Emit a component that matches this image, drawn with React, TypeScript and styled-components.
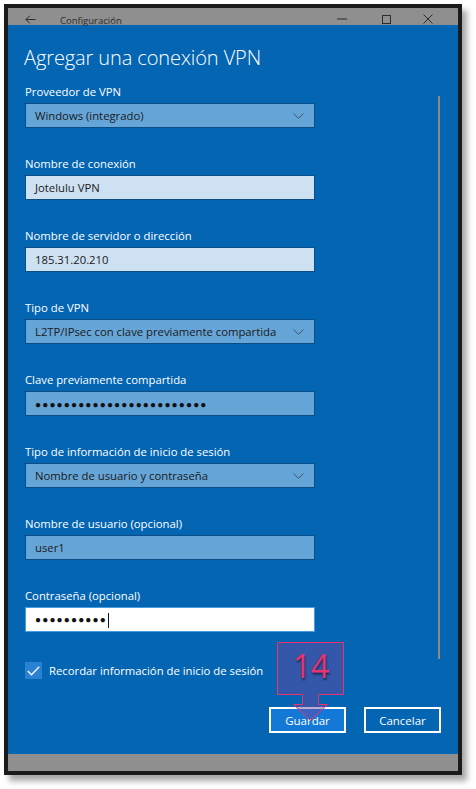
import React from 'react'
import styled, { createGlobalStyle } from 'styled-components'

const colors = {
  accent: '#0465b3',
  chrome: '#8f8f8f',
  frame: '#1b1b1b',
  fieldDark: '#66a5d7',
  fieldLight: '#cde1f2',
  fieldBorder: '#0b4d86',
  white: '#ffffff',
  ink: '#1a1a1a',
  pink: '#e8336f'
}

const GlobalStyle = createGlobalStyle`
  html, body {
    margin: 0;
    padding: 0;
    background: #ffffff;
  }
  body {
    font-family: "Open Sans", "Noto Sans", "Liberation Sans", sans-serif;
  }
`

const Page = styled.div`
  width: 476px;
  height: 789px;
  padding: 4px 0 0 4px;
  box-sizing: border-box;
`

const Window = styled.div`
  position: relative;
  width: 458px;
  height: 771px;
  box-sizing: border-box;
  border: 4px solid ${colors.frame};
  background: ${colors.accent};
  display: flex;
  flex-direction: column;
  box-shadow: 5px 6px 6px rgba(0, 0, 0, 0.35);
`

const TitleBar = styled.div`
  height: 17px;
  flex: none;
  background: ${colors.chrome};
  display: flex;
  align-items: flex-end;
  padding: 0 10px 0 16px;
  color: #2b2b2b;
`

const TitleText = styled.span`
  font-size: 9.5px;
  line-height: 12px;
  margin-left: 24px;
  flex: 1;
  transform: translateY(2px);
`

const ChromeButton = styled.span<{ w: number }>`
  width: ${(p) => p.w}px;
  height: 14px;
  display: flex;
  align-items: center;
  justify-content: center;
  transform: translateY(1px);
`

const Body = styled.div`
  flex: 1;
  display: flex;
  flex-direction: column;
`

const Scroller = styled.div`
  display: flex;
  align-items: flex-start;
`

const Form = styled.div`
  flex: 1;
  padding: 19px 0 0 16px;
`

const Heading = styled.h1`
  margin: 0 0 10px;
  font-size: 20px;
  line-height: 28px;
  font-weight: 300;
  color: ${colors.white};
  letter-spacing: -0.1px;
`

const Fields = styled.div`
  display: flex;
  flex-direction: column;
  gap: 26px;
  padding-left: 1px;
`

const Field = styled.div`
  display: flex;
  flex-direction: column;
  gap: 3px;
`

const Label = styled.div`
  font-size: 11.3px;
  line-height: 16px;
  padding-top: 2px;
  color: ${colors.white};
`

type Tone = 'dark' | 'light' | 'focus'

const fieldBg: Record<Tone, string> = {
  dark: colors.fieldDark,
  light: colors.fieldLight,
  focus: colors.white
}

const Input = styled.div<{ tone: Tone }>`
  width: 290px;
  height: 25px;
  box-sizing: border-box;
  border: 1px solid ${(p) => (p.tone === 'focus' ? '#4a9be0' : colors.fieldBorder)};
  background: ${(p) => fieldBg[p.tone]};
  display: flex;
  align-items: center;
  padding: 0 10px 0 9px;
  font-size: 11.3px;
  color: ${colors.ink};
`

const Value = styled.span`
  flex: 1;
  white-space: nowrap;
`

const Dots = styled.span`
  font-size: 10px;
  letter-spacing: 1.15px;
  color: #111;
  line-height: 1;
`

const Caret = styled.span`
  display: inline-block;
  width: 1px;
  height: 15px;
  background: #111;
  vertical-align: middle;
  margin-left: 1px;
`

// thumb runs a little past the form, so it doesn't push the rows below
const ScrollThumb = styled.div`
  width: 2px;
  height: 563px;
  margin: 71px 18px -27px 0;
  background: #8a8a8a;
  flex: none;
`

const CheckRow = styled.label`
  display: flex;
  align-items: center;
  gap: 7px;
  margin: 30px 0 0 17px;
  font-size: 11.3px;
  color: ${colors.white};
`

const CheckBox = styled.span`
  width: 17px;
  height: 17px;
  background: #2a80d3;
  display: flex;
  align-items: center;
  justify-content: center;
`

const Actions = styled.div`
  display: flex;
  justify-content: flex-end;
  gap: 18px;
  padding: 28px 17px 0 0;
`

const Button = styled.button<{ primary?: boolean }>`
  width: 77px;
  height: 26px;
  box-sizing: border-box;
  border: 2px solid ${colors.white};
  background: ${(p) => (p.primary ? '#1479d6' : colors.accent)};
  color: ${colors.white};
  font-family: inherit;
  font-size: 11.5px;
  padding: 0;
`

const Footer = styled.div`
  height: 17px;
  flex: none;
  margin-top: auto;
  background: ${colors.chrome};
`

// step-number callout drawn over the Guardar button
const Callout = styled.div`
  position: absolute;
  left: 269px;
  top: 634px;
  width: 68px;
  height: 80px;
`

const CalloutNumber = styled.span`
  position: absolute;
  left: 0;
  top: 4px;
  width: 68px;
  text-align: center;
  font-size: 32px;
  line-height: 40px;
  color: ${colors.pink};
  text-shadow: 1px 2px 2px rgba(20, 20, 60, 0.7);
`

const Chevron = () => (
  <svg width="11" height="6" viewBox="0 0 11 6">
    <path d="M0.5 0.5 L5.5 5.3 L10.5 0.5" fill="none" stroke="#3a5573" strokeWidth="1" />
  </svg>
)

type FieldDef = {
  label: string
  tone: Tone
  value?: string
  dots?: number
  select?: boolean
  caret?: boolean
}

const fields: FieldDef[] = [
  { label: 'Proveedor de VPN', tone: 'dark', value: 'Windows (integrado)', select: true },
  { label: 'Nombre de conexión', tone: 'light', value: 'Jotelulu VPN' },
  { label: 'Nombre de servidor o dirección', tone: 'light', value: '185.31.20.210' },
  { label: 'Tipo de VPN', tone: 'dark', value: 'L2TP/IPsec con clave previamente compartida', select: true },
  { label: 'Clave previamente compartida', tone: 'dark', dots: 24 },
  { label: 'Tipo de información de inicio de sesión', tone: 'dark', value: 'Nombre de usuario y contraseña', select: true },
  { label: 'Nombre de usuario (opcional)', tone: 'dark', value: 'user1' },
  { label: 'Contraseña (opcional)', tone: 'focus', dots: 10, caret: true }
]

export default function App() {
  return (
    <Page>
      <GlobalStyle />
      <Window>
        <TitleBar>
          <ChromeButton w={12}>
            <svg width="11" height="9" viewBox="0 0 11 9">
              <path d="M10.5 4.5 H1 M4.8 0.7 L1 4.5 L4.8 8.3" fill="none" stroke="#2b2b2b" strokeWidth="1" />
            </svg>
          </ChromeButton>
          <TitleText>Configuración</TitleText>
          <ChromeButton w={44}>
            <svg width="10" height="2" viewBox="0 0 10 2">
              <path d="M0 1 H10" stroke="#2b2b2b" strokeWidth="1" />
            </svg>
          </ChromeButton>
          <ChromeButton w={44}>
            <svg width="9" height="9" viewBox="0 0 9 9">
              <rect x="0.5" y="0.5" width="8" height="8" fill="none" stroke="#2b2b2b" strokeWidth="1" />
            </svg>
          </ChromeButton>
          <ChromeButton w={40}>
            <svg width="10" height="10" viewBox="0 0 10 10">
              <path d="M0.5 0.5 L9.5 9.5 M9.5 0.5 L0.5 9.5" stroke="#2b2b2b" strokeWidth="1" />
            </svg>
          </ChromeButton>
        </TitleBar>

        <Body>
          <Scroller>
            <Form>
              <Heading>Agregar una conexión VPN</Heading>
              <Fields>
                {fields.map((f) => (
                  <Field key={f.label}>
                    <Label>{f.label}</Label>
                    <Input tone={f.tone}>
                      <Value>
                        {f.dots ? <Dots>{'●'.repeat(f.dots)}</Dots> : f.value}
                        {f.caret && <Caret />}
                      </Value>
                      {f.select && <Chevron />}
                    </Input>
                  </Field>
                ))}
              </Fields>
            </Form>
            <ScrollThumb />
          </Scroller>

          <CheckRow>
            <CheckBox>
              <svg width="13" height="10" viewBox="0 0 13 10">
                <path d="M0.8 5 L4.5 8.7 L12.2 0.8" fill="none" stroke="#ffffff" strokeWidth="1.3" />
              </svg>
            </CheckBox>
            Recordar información de inicio de sesión
          </CheckRow>

          <Actions>
            <Button primary>Guardar</Button>
            <Button>Cancelar</Button>
          </Actions>

          <Footer />
        </Body>

        <Callout>
          <svg width="68" height="80" viewBox="0 0 68 80">
            <path
              d="M0.5 0.5 H66.5 V52.5 H41.5 V62.5 H50.5 L33.5 78.5 L16.5 62.5 H25.5 V52.5 H0.5 Z"
              fill="rgba(110, 70, 160, 0.45)"
              stroke={colors.pink}
              strokeWidth="1"
            />
          </svg>
          <CalloutNumber>14</CalloutNumber>
        </Callout>
      </Window>
    </Page>
  )
}
